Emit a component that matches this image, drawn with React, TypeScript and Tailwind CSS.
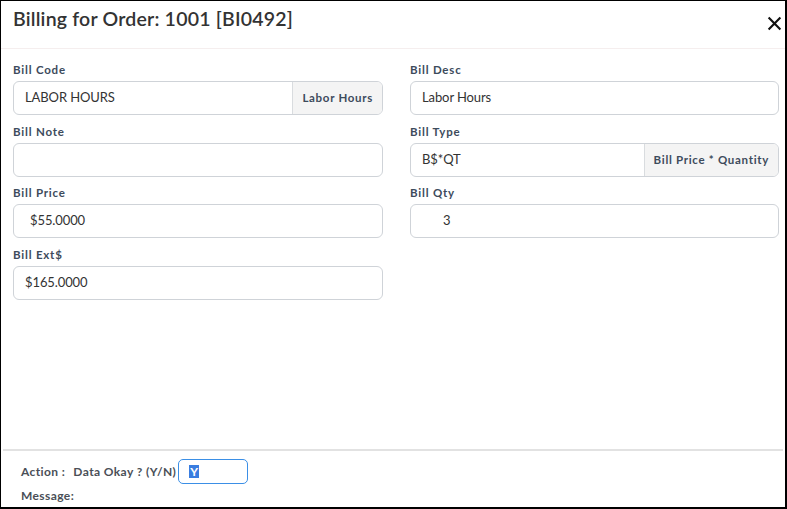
import type { ReactNode } from 'react';

const font = { fontFamily: 'Lato, "Open Sans", sans-serif' };

function Label({ children }: { children: ReactNode }) {
  return <div className="h-[14px] text-[11.5px] font-bold leading-[14px] tracking-[0.8px] text-[#3d4b5c]">{children}</div>;
}

function Field({ label, value, addon, indent }: { label: string; value?: string; addon?: string; indent?: string }) {
  return (
    <div className="flex flex-col gap-[4px]">
      <Label>{label}</Label>
      <div className="flex h-[34px] overflow-hidden rounded-[6px] border border-[#cfd3d8] bg-white">
        <div className={`flex flex-1 items-center text-[13px] tracking-[-0.1px] text-[#333] ${indent ?? 'pl-[11px]'}`}>{value}</div>
        {addon && (
          <div className="flex items-center border-l border-[#d9dcdf] bg-[#f4f4f4] px-[9px] text-[11.5px] font-bold tracking-[0.7px] text-[#3d4b5c]">
            {addon}
          </div>
        )}
      </div>
    </div>
  );
}

export default function App() {
  return (
    <div style={font} className="flex h-[509px] w-[787px] flex-col border-t border-r-2 border-b-2 border-l border-black bg-white">
      <div className="flex h-[48px] items-start justify-between border-b border-[#f5eeee] pt-[5px] pr-[3px] pl-[12px]">
        <h1 className="text-[19.5px] font-semibold leading-[26px] tracking-[0.2px] text-[#333]">Billing for Order: 1001 [BI0492]</h1>
        <svg className="mt-[10px] h-[15px] w-[15px]" viewBox="0 0 14 14" fill="none" stroke="#111" strokeWidth="2">
          <path d="M1.5 1.5l11 11M12.5 1.5l-11 11" />
        </svg>
      </div>

      <div className="grid flex-1 grid-cols-[370px_369px] content-start gap-x-[27px] gap-y-[9.5px] pt-[14px] pl-[12px]">
        <Field label="Bill Code" value="LABOR HOURS" addon="Labor Hours" />
        <Field label="Bill Desc" value="Labor Hours" />
        <Field label="Bill Note" />
        <Field label="Bill Type" value="B$*QT" addon="Bill Price * Quantity" />
        <Field label="Bill Price" value="$55.0000" indent="pl-[16px]" />
        <Field label="Bill Qty" value="3" indent="pl-[32px]" />
        <Field label="Bill Ext$" value="$165.0000" />
      </div>

      <div className="mx-[2px] border-t-2 border-[#e2e2e2] pt-[8px] pb-[4px] pl-[18px] text-[12px] font-bold tracking-[0.4px] text-[#4a4f57]">
        <div className="flex h-[25px] items-center">
          <span>Action :</span>
          <span className="ml-[8px]">Data Okay ? (Y/N)</span>
          <div className="ml-[2px] flex h-[25px] w-[70px] items-center rounded-[5px] border border-[#3b8fe6] pl-[10px]">
            <span className="bg-[#3a7de0] px-[1px] text-[12px] leading-[13px] text-white">Y</span>
          </div>
        </div>
        <div className="mt-[5px] leading-[14px]">Message:</div>
      </div>
    </div>
  );
}
